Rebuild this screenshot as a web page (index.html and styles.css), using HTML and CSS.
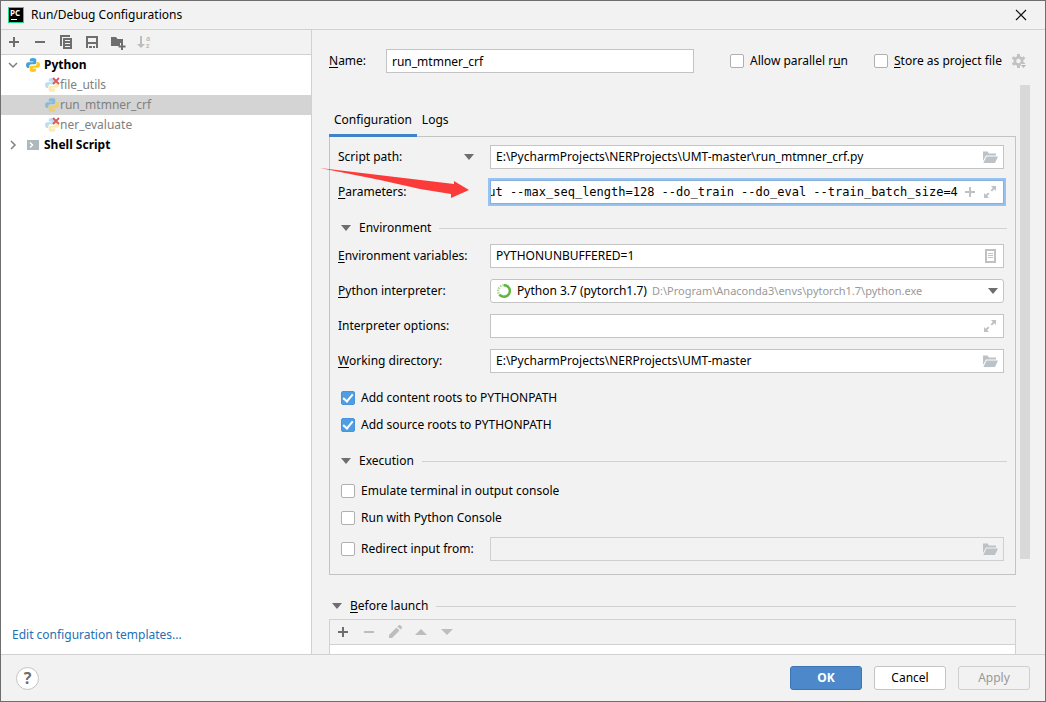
FILE: index.html
```html
<!DOCTYPE html>
<html lang="en">
<head>
<meta charset="utf-8">
<title>Run/Debug Configurations</title>
<link rel="stylesheet" href="styles.css">
</head>
<body>
<svg class="defs" aria-hidden="true">
  <symbol id="python" viewBox="0 0 16 16">
    <path class="py-blue" d="M8 1C5.6 1 4.8 1.8 4.8 3v1.6h3.4v.6H3.2C1.8 5.200 1 6.300 1 8s.8 2.900 1.900 2.900h1.400V9.300c0-1.200 1-2 2.100-2h3.200c1 0 1.700-.8 1.700-1.700V3C11.300 1.700 10.200 1 8 1z"/>
    <path class="py-yellow" transform="rotate(180 8 8)" d="M8 1C5.6 1 4.800 1.800 4.800 3v1.600h3.400v.6H3.200C1.800 5.200 1 6.300 1 8s.8 2.900 1.900 2.900h1.400V9.300c0-1.200 1-2 2.100-2h3.200c1 0 1.700-.8 1.700-1.700V3C11.300 1.700 10.200 1 8 1z"/>
  </symbol>
  <symbol id="folder" viewBox="0 0 16 16">
    <path fill="#bcc2c6" d="M1 2.500h4.500L7 4.500h7v2H4L1 12z"/>
    <path fill="#bcc2c6" d="M4.600 7.500H16L13 14H1.300z"/>
  </symbol>
  <symbol id="expand" viewBox="0 0 16 16">
    <path fill="#bcc2c6" d="M9 2h5v5l-1.700-1.700L10 7.600 8.600 6.200l2.200-2.300zM2 9l1.700 1.700L6 8.400l1.400 1.400-2.200 2.300L7 14H2z"/>
  </symbol>
  <symbol id="caret" viewBox="0 0 10 6"><path d="M0 0h10L5 6z"/></symbol>
  <symbol id="plus" viewBox="0 0 16 16"><path d="M7 3h2v4h4v2H9v4H7V9H3V7h4z"/></symbol>
  <symbol id="minus" viewBox="0 0 16 16"><path d="M3 7h10v2H3z"/></symbol>
  <symbol id="cross" viewBox="0 0 8 8"><path d="M1 1l6 6M7 1L1 7" stroke="#db5860" stroke-width="1.800"/></symbol>
</svg>

<div class="dialog">
  <header class="titlebar">
    <svg class="icon" viewBox="0 0 16 16"><rect width="16" height="16" fill="#21d789"/><rect x="1" y="1" width="14" height="14"/><text x="2" y="9" class="logo-text">PC</text><path fill="#fff" d="M3 12h6v1H3z"/></svg>
    <h1 class="title">Run/Debug Configurations</h1>
    <button class="plain" aria-label="Close"><svg class="icon" viewBox="0 0 16 16"><path d="M3 3l10 10M13 3L3 13" stroke="#111" stroke-width="1.200"/></svg></button>
  </header>

  <div class="body">
    <aside class="sidebar">
      <div class="toolbar">
        <button class="plain" aria-label="Add"><svg class="icon"><use href="#plus"/></svg></button>
        <button class="plain" aria-label="Remove"><svg class="icon"><use href="#minus"/></svg></button>
        <button class="plain" aria-label="Copy"><svg class="icon" viewBox="0 0 16 16"><path fill-rule="evenodd" d="M2 1h10v2H4v9H2zM5 4h9v11H5zM7 6v1h5V6zM7 9v1h5V9zM7 12v1h5v-1z"/></svg></button>
        <button class="plain" aria-label="Save"><svg class="icon" viewBox="0 0 16 16"><path fill-rule="evenodd" d="M2 2h12v12h-2v-4H4v4H2zM4 4v4h8V4zM5 12h3v2H5zM9 12h2v2H9z"/></svg></button>
        <button class="plain" aria-label="New folder"><svg class="icon" viewBox="0 0 16 16"><path d="M1 3h5l1.500 2H13v4h-3v3H1zM11 9h2v2.500h2.500v2H13V16h-2v-2.500H8.500v-2H11z"/></svg></button>
        <button class="plain off" aria-label="Sort" disabled><svg class="icon" viewBox="0 0 16 16"><path d="M4 2h2v8h3l-4 4-4-4h3z"/><text x="10" y="7" class="sort-text">a</text><text x="10" y="14" class="sort-text">z</text></svg></button>
      </div>
      <ul class="tree">
        <li class="node root"><svg class="icon chevron" viewBox="0 0 16 16"><path d="M4 6l4 4 4-4"/></svg><svg class="icon"><use href="#python"/></svg>Python</li>
        <li class="node leaf"><span class="badged"><svg class="icon faded"><use href="#python"/></svg><svg class="badge"><use href="#cross"/></svg></span>file_utils</li>
        <li class="node leaf selected"><svg class="icon half"><use href="#python"/></svg>run_mtmner_crf</li>
        <li class="node leaf"><span class="badged"><svg class="icon faded"><use href="#python"/></svg><svg class="badge"><use href="#cross"/></svg></span>ner_evaluate</li>
        <li class="node root"><svg class="icon chevron" viewBox="0 0 16 16"><path d="M6 4l4 4-4 4"/></svg><svg class="icon" viewBox="0 0 16 16"><path fill="#adb8bf" d="M2 3h12v10H2z"/><path d="M5 5.500L7.500 8 5 10.500" fill="none" stroke="#fff" stroke-width="1.500"/></svg>Shell Script</li>
      </ul>
      <a class="templates" href="#templates">Edit configuration templates...</a>
    </aside>

    <main class="main">
      <div class="name-row">
        <label class="name-label" for="name"><u>N</u>ame:</label>
        <input class="field name-input" id="name" type="text" value="run_mtmner_crf">
        <label class="check parallel"><input type="checkbox">Allow parallel r<u>u</u>n</label>
        <label class="check store"><input type="checkbox"><u>S</u>tore as project file</label>
        <button class="plain" aria-label="Store settings"><svg class="icon" viewBox="0 0 16 16"><g fill="#c2c2c2"><path d="M6 1h3v14H6z"/><path d="M6 1h3v14H6z" transform="rotate(60 7.500 8)"/><path d="M6 1h3v14H6z" transform="rotate(120 7.500 8)"/><circle cx="7.500" cy="8" r="5"/></g><circle cx="7.500" cy="8" r="2.300" fill="#f2f2f2"/><path fill="#f2f2f2" d="M10 11h6v4h-6z"/><path fill="#b5b5b5" d="M10 12h5l-2.500 3z"/></svg></button>
      </div>

      <div class="scroll">
        <div class="content">
          <div class="tabs" role="tablist">
            <button class="tab active" role="tab" aria-selected="true">Configuration</button>
            <button class="tab" role="tab" aria-selected="false">Logs</button>
          </div>

          <section class="panel">
            <div class="form">
              <div class="mode">
                <select class="bare" aria-label="Target type"><option>Script path:</option></select>
                <svg class="caret"><use href="#caret"/></svg>
              </div>
              <div class="field combo"><input class="bare grow" type="text" aria-label="Script path" value="E:\PycharmProjects\NERProjects\UMT-master\run_mtmner_crf.py"><svg class="icon"><use href="#folder"/></svg></div>

              <label for="params"><u>P</u>arameters:</label>
              <div class="field combo focused"><input class="bare grow mono" id="params" type="text" value="put --max_seq_length=128 --do_train --do_eval --train_batch_size=4"><svg class="icon pale"><use href="#plus"/></svg><svg class="icon"><use href="#expand"/></svg></div>
            </div>

            <h2 class="divider"><svg class="caret"><use href="#caret"/></svg>Environment</h2>

            <div class="form">
              <label for="env"><u>E</u>nvironment variables:</label>
              <div class="field combo"><input class="bare grow" id="env" type="text" value="PYTHONUNBUFFERED=1"><svg class="icon" viewBox="0 0 16 16"><path fill="#bcc2c6" fill-rule="evenodd" d="M3 1h11v14H3zM5 3v10h7V3zM6 5h5v1H6zM6 7h5v1H6zM6 9h5v1H6z"/></svg></div>

              <label for="interp"><u>P</u>ython interpreter:</label>
              <div class="field combo rounded">
                <svg class="icon" viewBox="0 0 16 16"><g fill="none" stroke="#62b543" stroke-width="2.400"><circle cx="8" cy="8" r="5.800" stroke="#a9d698" stroke-dasharray="1.500 1"/><path d="M8 2.200a5.800 5.800 0 1 1-4.600 9.300"/></g></svg>
                <select class="bare" id="interp"><option>Python 3.7 (pytorch1.7)</option></select>
                <span class="path">D:\Program\Anaconda3\envs\pytorch1.7\python.exe</span>
                <svg class="caret"><use href="#caret"/></svg>
              </div>

              <label for="opts">Interpreter options:</label>
              <div class="field combo"><input class="bare grow" id="opts" type="text"><svg class="icon"><use href="#expand"/></svg></div>

              <label for="dir"><u>W</u>orking directory:</label>
              <div class="field combo"><input class="bare grow" id="dir" type="text" value="E:\PycharmProjects\NERProjects\UMT-master"><svg class="icon"><use href="#folder"/></svg></div>
            </div>

            <div class="checks roots">
              <label class="check"><input type="checkbox" checked>Add content roots to PYTHONPATH</label>
              <label class="check"><input type="checkbox" checked>Add source roots to PYTHONPATH</label>
            </div>

            <h2 class="divider"><svg class="caret"><use href="#caret"/></svg>Execution</h2>

            <div class="checks">
              <label class="check"><input type="checkbox">Emulate terminal in output console</label>
              <label class="check"><input type="checkbox">Run with Python Console</label>
            </div>
            <div class="form redirect">
              <label class="check"><input type="checkbox">Redirect input from:</label>
              <div class="field combo disabled"><input class="bare grow" type="text" aria-label="Input file" disabled><svg class="icon"><use href="#folder"/></svg></div>
            </div>

            <svg class="pointer" viewBox="0 0 150 32" aria-hidden="true"><path fill="#fb3b3a" d="M0 0L134 16 134 13 149 22 131 30 131 26 100 21 60 12z"/></svg>
          </section>

          <h2 class="divider launch"><svg class="caret"><use href="#caret"/></svg><span><u>B</u>efore launch</span></h2>
          <div class="tasks">
            <div class="toolbar">
              <button class="plain" aria-label="Add task"><svg class="icon"><use href="#plus"/></svg></button>
              <button class="plain off" aria-label="Remove task" disabled><svg class="icon"><use href="#minus"/></svg></button>
              <button class="plain off" aria-label="Edit task" disabled><svg class="icon" viewBox="0 0 16 16"><path d="M2 11l7.500-7.500 3 3L5 14H2zM10.500 2.500L12 1h1l2 2v1l-1.500 1.500z"/></svg></button>
              <button class="plain off" aria-label="Move up" disabled><svg class="icon" viewBox="0 0 16 16"><path d="M2 11l6-6 6 6z"/></svg></button>
              <button class="plain off" aria-label="Move down" disabled><svg class="icon" viewBox="0 0 16 16"><path d="M2 5l6 6 6-6z"/></svg></button>
            </div>
            <div class="task-list"></div>
          </div>
        </div>
        <div class="track"><div class="thumb"></div></div>
      </div>
    </main>
  </div>

  <footer class="footer">
    <button class="help" aria-label="Help">?</button>
    <button class="btn primary">OK</button>
    <button class="btn">Cancel</button>
    <button class="btn" disabled>Apply</button>
  </footer>
</div>
<script src="app.js"></script>
</body>
</html>
```
FILE: app.js
```js
const params = document.getElementById('params');
params.scrollLeft = params.scrollWidth;
```
FILE: styles.css
```css
* { box-sizing: border-box; }
body {
  margin: 0;
  background: #f2f2f2;
  color: #000;
  font: 12px/20px "Noto Sans", "Open Sans", sans-serif;
}
button, input, select { font: inherit; color: inherit; margin: 0; }
u { text-underline-offset: 2px; }
.defs { position: absolute; width: 0; height: 0; }
.py-blue { fill: #46a2d6; }
.py-yellow { fill: #fccb1b; }

.dialog {
  display: flex;
  flex-direction: column;
  height: 100vh;
  border: 1px solid #6e6e6e;
}
.icon { display: block; flex: none; width: 16px; height: 16px; overflow: visible; }
.caret { display: block; flex: none; width: 10px; height: 6px; fill: #6e6e6e; }
.plain {
  display: block;
  padding: 0;
  border: 0;
  background: none;
  fill: #6e6e6e;
}
.off { fill: #bdbdbd; }

.titlebar {
  display: flex;
  align-items: center;
  gap: 7px;
  height: 29px;
  padding: 0 16px 0 7px;
  border-bottom: 1px solid #d1d1d1;
}
.title { flex: 1; margin: 0; font-size: 12px; font-weight: 400; }
.logo-text { fill: #fff; font: bold 8px "Open Sans", sans-serif; }
.sort-text { font: bold 7px "Open Sans", sans-serif; }

.body { display: flex; flex: 1; min-height: 0; }

.sidebar {
  display: flex;
  flex-direction: column;
  flex: none;
  width: 311px;
  border-right: 1px solid #d1d1d1;
  background: #fff;
}
.toolbar {
  display: flex;
  align-items: center;
  gap: 10px;
  height: 25px;
  padding: 0 5px;
  border-bottom: 1px solid #d1d1d1;
  background: #f2f2f2;
}
.tree { flex: 1; margin: 0; padding: 0; list-style: none; }
.node { display: flex; align-items: center; height: 20px; }
.root { gap: 3px; padding-left: 4px; font-weight: 700; }
.chevron { margin-right: 1px; fill: none; stroke: #7f7f7f; stroke-width: 1.5; }
.leaf { padding-left: 43px; color: #808080; }
.selected { background: #d4d4d4; }
.faded { opacity: .35; }
.half { opacity: .5; }
.badged { position: relative; }
.badge { position: absolute; top: 0; right: 0; width: 8px; height: 8px; }
.templates {
  padding: 0 11px 9px;
  color: #2470b3;
  text-decoration: none;
}

.main {
  display: flex;
  flex: 1;
  flex-direction: column;
  min-width: 0;
  padding: 19px 15px 0 17px;
}
.name-row { display: flex; align-items: center; padding-right: 3px; }
.name-label { width: 57px; }
.name-input { flex: 1; min-width: 0; margin-right: 36px; padding: 0 5px; }
.parallel { min-width: 144px; }
.store { min-width: 137px; }

.field {
  height: 24px;
  border: 1px solid #c4c4c4;
  border-radius: 0;
  background: #fff;
}
.combo { display: flex; align-items: center; gap: 5px; min-width: 0; padding: 0 5px; }
.rounded { border-radius: 3px; }
.disabled { border-color: #cfcfcf; background: #f2f2f2; }
.focused {
  gap: 4px;
  padding-left: 0;
  border-color: #87afda;
  box-shadow: 0 0 0 2px #97c3f3;
}
.bare {
  min-width: 0;
  height: 20px;
  padding: 0;
  border: 0;
  outline: 0;
  background: none;
  appearance: none;
}
.grow { flex: 1; width: 0; }
.mono { font: 12px/20px "DejaVu Sans Mono", monospace; }
.pale { fill: #bcc2c6; }
.path { flex: 1; overflow: hidden; color: #999; font-size: 11px; white-space: nowrap; }

.check { display: flex; align-items: center; white-space: pre; }
.check input {
  flex: none;
  width: 14px;
  height: 14px;
  margin-right: 6px;
  border: 1px solid #b0b0b0;
  border-radius: 2px;
  background: #fff;
  appearance: none;
}
.check input:checked {
  border-color: #4a93dc;
  background: #4f9ee3;
}
.check input:checked::before {
  content: "";
  display: block;
  width: 4px;
  height: 8px;
  margin: 0 auto;
  border: solid #fff;
  border-width: 0 2px 2px 0;
  box-sizing: content-box;
  transform: rotate(40deg);
}

.scroll { display: flex; flex: 1; gap: 4px; min-height: 0; margin-top: 12px; }
.content { flex: 1; min-width: 0; overflow: hidden; margin-left: -10px; padding-left: 10px; }
.track { flex: none; width: 10px; }
.thumb { height: 83.3%; background: #d9d9d9; }

.tabs { position: relative; z-index: 1; display: flex; margin: 22px 0 -1px; }
.tab {
  height: 30px;
  padding: 0 5px 2px;
  border: 0;
  border-bottom: 3px solid transparent;
  background: none;
}
.active { border-color: #4083c9; }

.panel {
  position: relative;
  padding: 8px 8px 13px;
  border: 1px solid #c4c4c4;
}
.form {
  display: grid;
  grid-template-columns: 152px minmax(0, 1fr);
  gap: 11px 0;
  align-items: center;
  margin-right: 3px;
}
.mode { display: flex; align-items: center; justify-content: space-between; padding-right: 16px; }
.divider {
  display: flex;
  align-items: center;
  gap: 8px;
  margin: 14px 0 6px;
  padding-left: 3px;
  font-size: 12px;
  font-weight: 400;
}
.divider::after { content: ""; flex: 1; height: 1px; background: #d1d1d1; }
.checks { display: grid; gap: 7px; padding: 4px 3px 0; }
.roots { padding-top: 15px; }
.roots + .divider { margin: 16px 0 6px; }
.redirect { margin-top: 9px; }
.redirect .check { padding-left: 3px; }
.pointer { position: absolute; top: 31px; left: -10px; width: 150px; height: 32px; }

.launch { margin: 21px 0 3px; }
.tasks { border: 1px solid #d1d1d1; }
.task-list { height: 60px; background: #fff; }

.footer {
  display: flex;
  align-items: center;
  gap: 12px;
  height: 47px;
  padding: 0 15px;
  border-top: 1px solid #d1d1d1;
}
.help {
  width: 23px;
  height: 23px;
  margin-right: auto;
  padding: 0;
  border: 1px solid #c4c4c4;
  border-radius: 50%;
  background: #fff;
  color: #6e6e6e;
  font-size: 16px;
  font-weight: 700;
  line-height: 20px;
}
.btn {
  width: 72px;
  height: 24px;
  padding: 0;
  border: 1px solid #c4c4c4;
  border-radius: 3px;
  background: #fff;
}
.btn:disabled { border-color: #cfcfcf; background: #f2f2f2; color: #999; }
.primary { border-color: #3d75b4; background: #4d89ca; color: #fff; font-weight: 700; }
```
